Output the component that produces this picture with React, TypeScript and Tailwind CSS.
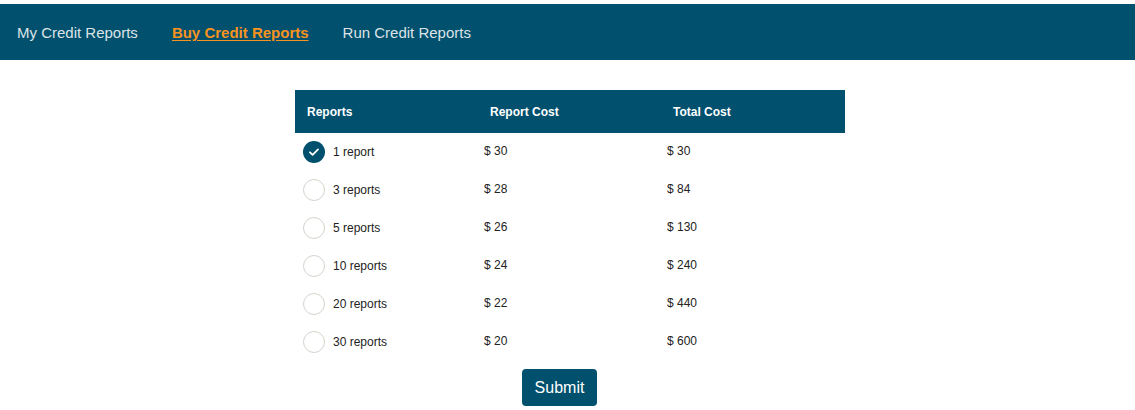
import React, { useState } from "react";

const rows = [
  { label: "1 report", cost: 30, total: 30 },
  { label: "3 reports", cost: 28, total: 84 },
  { label: "5 reports", cost: 26, total: 130 },
  { label: "10 reports", cost: 24, total: 240 },
  { label: "20 reports", cost: 22, total: 440 },
  { label: "30 reports", cost: 20, total: 600 },
];

const App: React.FC = () => {
  const [selected, setSelected] = useState(0);

  return (
    <div className="min-h-screen bg-white pt-[4px] font-['Liberation_Sans',Arial,sans-serif]">
      <nav className="flex h-[56px] items-center bg-[#00506e] pl-[17px] pt-[2px] text-[15px]">
        <a className="text-[#dde3e6]">My Credit Reports</a>
        <a className="ml-[34px] font-bold text-[#f7931e] underline underline-offset-2">Buy Credit Reports</a>
        <a className="ml-[34px] text-[#dde3e6]">Run Credit Reports</a>
      </nav>

      <div className="ml-[295px] mt-[30px] w-[550px]">
        <div className="grid h-[43px] grid-cols-[183px_183px_184px] items-center bg-[#00506e] text-[12px] font-bold text-white">
          <div className="pl-3">Reports</div>
          <div className="pl-3">Report Cost</div>
          <div className="pl-3">Total Cost</div>
        </div>
        {rows.map((r, i) => (
          <div
            key={r.label}
            className="grid h-[38px] grid-cols-[183px_183px_184px] items-center text-[12px] text-[#222]"
          >
            <label className="flex cursor-pointer items-center pl-2" onClick={() => setSelected(i)}>
              {selected === i ? (
                <span className="flex h-[22px] w-[22px] items-center justify-center rounded-full bg-[#00506e]">
                  <svg width="12" height="12" viewBox="0 0 12 12" fill="none">
                    <path d="M2 6.3l2.6 2.6L10 3.4" stroke="white" strokeWidth="1.8" strokeLinecap="round" strokeLinejoin="round" />
                  </svg>
                </span>
              ) : (
                <span className="h-[22px] w-[22px] rounded-full border border-[#d6d3cc] bg-white" />
              )}
              <span className="ml-[8px]">{r.label}</span>
            </label>
            <div className="-mt-[2px] pl-[6px]">$ {r.cost}</div>
            <div className="-mt-[2px] pl-[6px]">$ {r.total}</div>
          </div>
        ))}
        <button className="ml-[227px] mt-[8px] h-[37px] w-[75px] rounded-[4px] bg-[#00506e] text-[16px] text-white">
          Submit
        </button>
      </div>
    </div>
  );
};

export default App;
